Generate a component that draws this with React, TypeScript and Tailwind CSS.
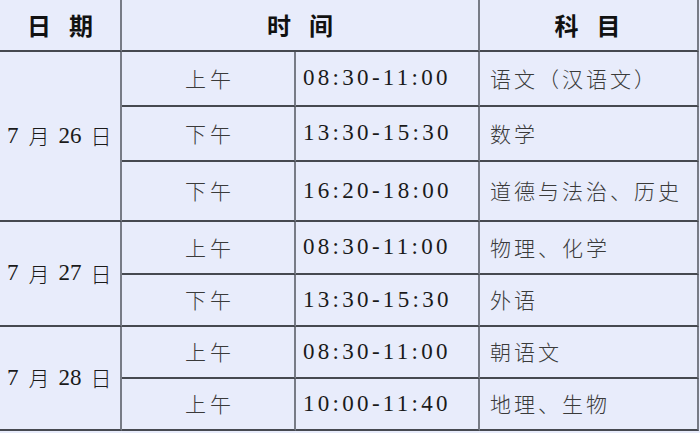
const rows = [
  { period: '上午', time: '08:30-11:00', subject: '语文（汉语文）' },
  { period: '下午', time: '13:30-15:30', subject: '数学' },
  { period: '下午', time: '16:20-18:00', subject: '道德与法治、历史' },
  { period: '上午', time: '08:30-11:00', subject: '物理、化学' },
  { period: '下午', time: '13:30-15:30', subject: '外语' },
  { period: '上午', time: '08:30-11:00', subject: '朝语文' },
  { period: '上午', time: '10:00-11:40', subject: '地理、生物' },
];

const cell = 'flex items-center border-r-2 border-b-2 border-r-[#777b86] border-b-[#464950]';
const serif = "font-['Liberation_Serif','Noto_Sans_CJK_SC',serif]";
const cjk = "font-['Noto_Sans_CJK_SC',sans-serif]";

function DateCell({ month, day, span }: { month: string; day: string; span: string }) {
  return (
    <div className={`${cell} ${span} col-start-1 pl-[7px] text-[23px] text-[#1a1a1a]`}>
      <span className={serif}>{month}</span>
      <span className={`${cjk} ml-[10px] font-light text-[21px]`}>月</span>
      <span className={`${serif} ml-[9px]`}>{day}</span>
      <span className={`${cjk} ml-[9px] font-light text-[21px]`}>日</span>
    </div>
  );
}

export default function App() {
  return (
    <div className="h-[433px] w-[700px] bg-[#e8ecfb]">
      <div className="grid w-[699px] grid-cols-[122px_174px_184px_219px] grid-rows-[52px_55px_55px_60px_53px_52px_52px_52px]">
        <div className={`${cell} justify-center ${cjk} text-[24px] font-bold tracking-[18px] text-[#111] pl-[18px]`}>日期</div>
        <div className={`${cell} col-span-2 justify-center ${cjk} text-[24px] font-bold tracking-[18px] text-[#111] pl-[18px]`}>时间</div>
        <div className={`${cell} justify-center ${cjk} text-[24px] font-bold tracking-[18px] text-[#111] pl-[16px]`}>科目</div>

        <DateCell month="7" day="26" span="row-start-2 row-span-3" />
        <DateCell month="7" day="27" span="row-start-5 row-span-2" />
        <DateCell month="7" day="28" span="row-start-7 row-span-2" />

        {rows.map((r, i) => (
          <div key={i} className="contents">
            <div className={`${cell} col-start-2 justify-center ${cjk} font-light text-[21px] tracking-[4px] text-[#3a3a3a] pl-[4px]`}>
              {r.period}
            </div>
            <div className={`${cell} col-start-3 pl-[7px] ${serif} text-[23px] tracking-[3.3px] text-[#1a1a1a]`}>
              {r.time}
            </div>
            <div className={`${cell} col-start-4 pl-[10px] ${cjk} font-light text-[21px] tracking-[3px] text-[#3a3a3a]`}>
              {r.subject}
            </div>
          </div>
        ))}
      </div>
    </div>
  );
}
